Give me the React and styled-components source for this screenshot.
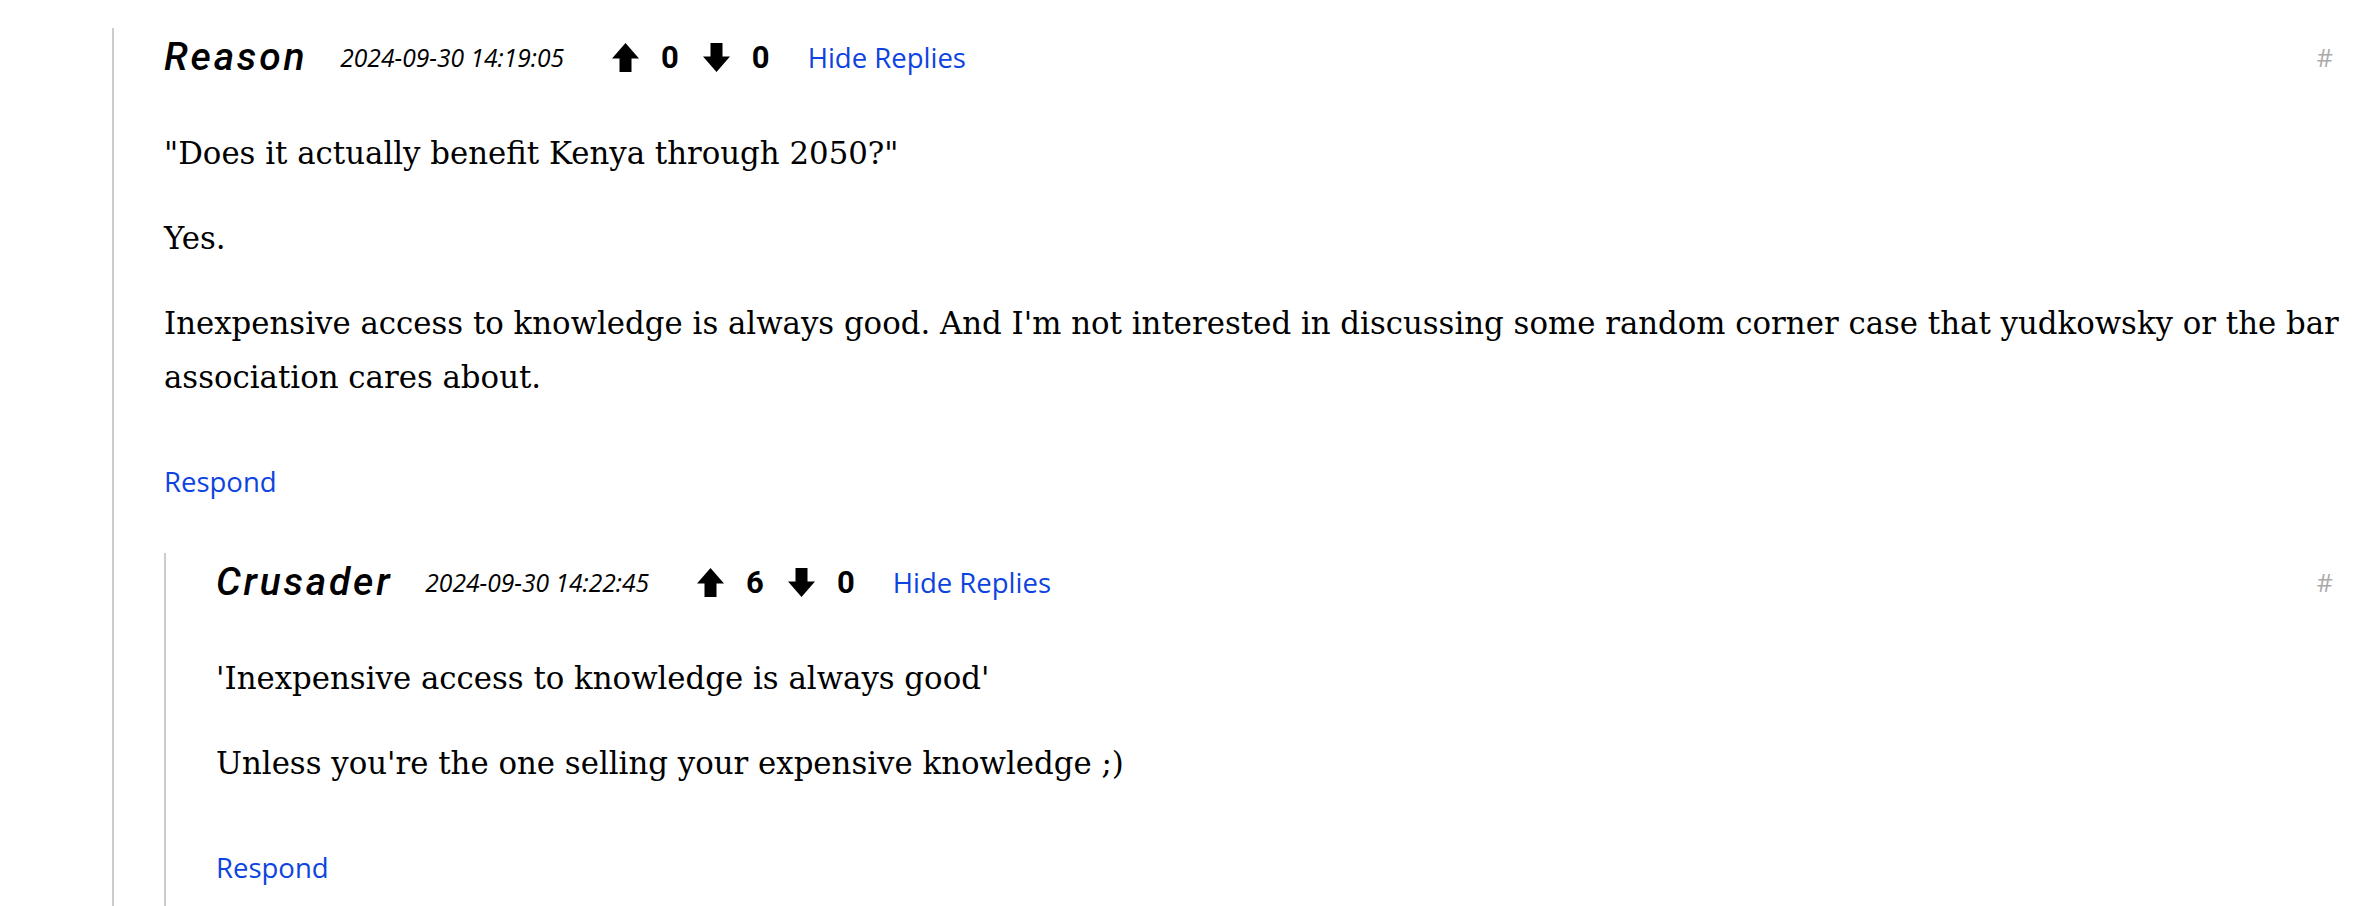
import React from 'react'
import styled, { createGlobalStyle } from 'styled-components'

const GlobalStyle = createGlobalStyle`
  html, body {
    margin: 0;
    padding: 0;
    background: #fff;
  }
`

const Thread = styled.div`
  margin: 28px 20px 0 112px;
`

const Comment = styled.div`
  border-left: 2px solid #cccccc;
  padding-left: 50px;
  padding-bottom: ${({ last }) => (last ? '24px' : '0')};
`

const Header = styled.div`
  display: flex;
  align-items: center;
  height: 58px;
`

const Author = styled.span`
  font-family: Roboto, 'Liberation Sans', sans-serif;
  font-style: italic;
  font-weight: 500;
  font-size: 39px;
  letter-spacing: 2.8px;
  color: #000;
  margin-right: 33px;
`

const Stamp = styled.span`
  font-family: 'Open Sans', 'Noto Sans', sans-serif;
  font-style: italic;
  font-size: 24.6px;
  color: #000;
  margin-right: 48px;
`

const Vote = styled.span`
  display: inline-flex;
  align-items: center;
  gap: 22px;
  margin-right: 24px;
`

const Count = styled.span`
  font-family: Roboto, 'Liberation Sans', sans-serif;
  font-weight: 700;
  font-size: 31px;
  color: #000;
`

const Link = styled.a`
  font-family: 'Open Sans', 'Noto Sans', sans-serif;
  font-size: 27.5px;
  color: #0d44e0;
  text-decoration: none;
  cursor: pointer;
`

const HideLink = styled(Link)`
  margin-left: 14px;
`

const Anchor = styled.span`
  margin-left: auto;
  font-family: 'Open Sans', 'Noto Sans', sans-serif;
  font-size: 25px;
  color: #aaaaaa;
  padding-right: 7px;
`

const Body = styled.div`
  margin-top: 40px;
  font-family: 'DejaVu Serif', 'Liberation Serif', serif;
  font-size: 30.8px;
  line-height: 54px;
  color: #000;

  p {
    margin: 0 0 31px 0;
  }
  p:last-child {
    margin-bottom: 0;
  }
`

const Actions = styled.div`
  margin-top: 58px;
  line-height: 40px;
`

const Replies = styled.div`
  margin-top: 46px;
`

function Arrow({ down }) {
  return (
    <svg width="27" height="29" viewBox="0 0 27 29">
      <path
        fill="#000"
        transform={down ? 'rotate(180 13.5 14.5)' : undefined}
        d="M13.5 0 L27 15.5 L19.5 15.5 L19.5 29 L7.5 29 L7.5 15.5 L0 15.5 Z"
      />
    </svg>
  )
}

function CommentItem({ author, stamp, up, down, paragraphs, last, children }) {
  return (
    <Comment last={last}>
      <Header>
        <Author>{author}</Author>
        <Stamp>{stamp}</Stamp>
        <Vote>
          <Arrow />
          <Count>{up}</Count>
        </Vote>
        <Vote>
          <Arrow down />
          <Count>{down}</Count>
        </Vote>
        <HideLink>Hide Replies</HideLink>
        <Anchor>#</Anchor>
      </Header>
      <Body>
        {paragraphs.map((t, i) => (
          <p key={i}>{t}</p>
        ))}
      </Body>
      <Actions>
        <Link>Respond</Link>
      </Actions>
      {children && <Replies>{children}</Replies>}
    </Comment>
  )
}

export default function App() {
  return (
    <>
      <GlobalStyle />
      <Thread>
        <CommentItem
          author="Reason"
          stamp="2024-09-30 14:19:05"
          up={0}
          down={0}
          paragraphs={[
            '"Does it actually benefit Kenya through 2050?"',
            'Yes.',
            "Inexpensive access to knowledge is always good. And I'm not interested in discussing some random corner case that yudkowsky or the bar association cares about.",
          ]}
        >
          <CommentItem
            last
            author="Crusader"
            stamp="2024-09-30 14:22:45"
            up={6}
            down={0}
            paragraphs={[
              "'Inexpensive access to knowledge is always good'",
              "Unless you're the one selling your expensive knowledge ;)",
            ]}
          />
        </CommentItem>
      </Thread>
    </>
  )
}
